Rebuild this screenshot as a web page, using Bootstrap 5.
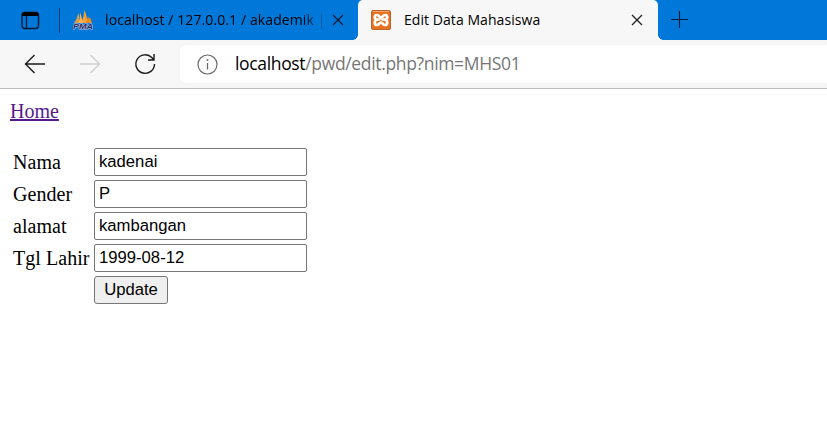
<!DOCTYPE html>
<html lang="id">
<head>
<meta charset="utf-8">
<meta name="viewport" content="width=device-width, initial-scale=1">
<title>Edit Data Mahasiswa</title>
<link href="https://cdn.jsdelivr.net/npm/bootstrap@5.3.0/dist/css/bootstrap.min.css" rel="stylesheet">
<style>
body{background:#fff;color:#000;overflow:hidden}
svg{display:block;flex:none}
.chrome{font-family:"Open Sans","Noto Sans",sans-serif}
.tabstrip{height:40px;background:#0078d9}
.tab-actions{width:60px;height:40px;padding-left:21px}
.split-line{width:1px;height:25px;background:#003f73;margin-left:-1px}
.tab-text{font-size:14px;line-height:20px;white-space:nowrap}
.tab-idle{width:298px;height:40px;padding-left:13px}
.tab-idle .tab-text{width:219px;margin-left:12px;letter-spacing:.1px;-webkit-mask-image:linear-gradient(90deg,#000 198px,#0004 214px);mask-image:linear-gradient(90deg,#000 198px,#0004 214px)}
.tab-current{width:300px;height:40px;padding-left:13px;background:#f7f7f7;border-radius:5px 5px 0 0}
.tab-current::before,.tab-current::after{content:"";position:absolute;bottom:0;width:5px;height:5px}
.tab-current::before{left:-5px;background:radial-gradient(circle at 0 0,transparent 4.5px,#f7f7f7 5px)}
.tab-current::after{right:-5px;background:radial-gradient(circle at 100% 0,transparent 4.5px,#f7f7f7 5px)}
.tab-current .tab-text{width:227px;margin-left:13px;letter-spacing:.06px}
.new-tab{margin-left:13px}
.toolbar{height:49px;background:#f7f7f7;border-bottom:1px solid #bcbcbc;padding-left:24px}
.nav-icons{gap:33px}
.address{height:38px;margin-left:24px;padding-left:17px;background:#fff;border-radius:5px 0 0 5px;box-shadow:0 0 3px #0000000d}
.url{font-size:17.5px;line-height:24px;margin-left:17px;color:#767676;white-space:nowrap;letter-spacing:-.34px;padding-bottom:2px}
.url span{color:#000}
.page{font-family:"Liberation Serif","Times New Roman",serif;font-size:20px;line-height:23px;padding:11px 10px 10px}
.page a{color:#551a8b}
.form-grid{display:grid;grid-template-columns:77px 213px;column-gap:4px;row-gap:4px;margin:25px 0 0 3px}
.form-grid label{line-height:28px;height:28px;white-space:nowrap;letter-spacing:.05px}
.field,.update{font-family:"Liberation Sans",Arial,sans-serif;font-size:16.667px;line-height:19px;height:28px;border:1px solid #767676;border-radius:2px;color:#000}
.field{width:213px;padding:2px 4px;background:#fff}
.update{grid-column:2;width:74px;padding:0 0 1px;background:#efefef;border-radius:3px}
</style>
</head>
<body>
<header class="chrome">
  <div class="tabstrip d-flex align-items-center">
    <div class="tab-actions d-flex align-items-center">
      <svg width="19" height="19" viewBox="0 0 19 19"><rect x="1" y="1.5" width="16.5" height="16" rx="3" fill="none" stroke="#001a35" stroke-width="1.4"/><path d="M1 5V4a3 3 0 0 1 3-3h10.5a3 3 0 0 1 3 3v1z" fill="#000"/><path d="M5.500 5v12" stroke="#001a35" stroke-width="1.3"/></svg>
    </div>
    <div class="split-line"></div>
    <div class="tab-idle d-flex align-items-center">
      <svg width="20" height="20" viewBox="0 0 20 20"><path d="M1 13Q4 9 5.500 3Q7 8 6 13z" fill="#d9a04b"/><path d="M8 13Q11 7 11.500 0Q14.500 7 14 13z" fill="#f7a035"/><path d="M13 13l2-7 1 3 1-2 2 6z" fill="#e88b20"/><path d="M5.500 13Q7.500 8 7 2l3 11z" fill="#ffb04f"/><text x="0" y="19" textLength="20" lengthAdjust="spacingAndGlyphs" font-family="Liberation Sans,Arial,sans-serif" font-weight="700" font-style="italic" font-size="8" fill="#252b64" stroke="#b9bfdc" stroke-width="1.2" paint-order="stroke">PMA</text></svg>
      <span class="tab-text">localhost / 127.0.0.1 / akademik |</span>
      <svg class="ms-2" width="12" height="12" viewBox="0 0 12 12"><path d="M1 1l10 10M11 1L1 11" stroke="#001a35" stroke-width="1.3"/></svg>
    </div>
    <div class="tab-current position-relative d-flex align-items-center">
      <svg width="20" height="20" viewBox="0 0 20 20"><rect x=".5" y=".5" width="19" height="19" rx="1.5" fill="#e8711f" stroke="#b9652f"/><path d="M2 1.500h16" stroke="#f3a470"/><g fill="none" stroke="#fff" stroke-width="2.700" stroke-linecap="round" stroke-linejoin="round"><path d="M8.500 9.500H5.800C3 9 3.200 5 5.800 5C8.500 5 8 7.500 10 7.500s1.500-2.500 4.200-2.500C16.800 5 17 9 14.200 9.500h-2.700"/><path d="M5.800 9.500C3 10.500 3.200 15 5.800 15C8.500 15 8 12.500 10 12.500s1.500 2.500 4.200 2.500C16.800 15 17 10.500 14.200 9.500"/></g></svg>
      <span class="tab-text">Edit Data Mahasiswa</span>
      <svg width="12" height="12" viewBox="0 0 12 12"><path d="M1 1l10 10M11 1L1 11" stroke="#222" stroke-width="1.3"/></svg>
    </div>
    <svg class="new-tab" width="18" height="18" viewBox="0 0 18 18"><path d="M8.500 0v17M0 8.500h17" stroke="#001a35" stroke-width="1.1"/></svg>
  </div>
  <div class="toolbar d-flex align-items-center">
    <div class="nav-icons d-flex align-items-center">
      <svg width="22" height="20" viewBox="0 0 22 20"><path d="M21 10H1.500M10.500 1L1.500 10l9 9" fill="none" stroke="#1b1b1b" stroke-width="1.4"/></svg>
      <svg width="22" height="20" viewBox="0 0 22 20"><path d="M1 10h19.500M11.500 1l9 9-9 9" fill="none" stroke="#cdcdcd" stroke-width="1.3"/></svg>
      <svg width="22" height="22" viewBox="0 0 22 22"><path d="M20.500 11A9.300 9.300 0 1 1 17.800 4.500L20 7M20 1v6h-6" fill="none" stroke="#1b1b1b" stroke-width="1.4"/></svg>
    </div>
    <div class="address d-flex align-items-center flex-grow-1">
      <svg width="21" height="21" viewBox="0 0 21 21"><circle cx="10.500" cy="10.500" r="9.500" fill="none" stroke="#6b6b6b" stroke-width="1.2"/><path d="M10.500 9v6.500" stroke="#6b6b6b" stroke-width="1.3"/><circle cx="10.500" cy="6" r="1" fill="#6b6b6b"/></svg>
      <div class="url"><span>localhost</span>/pwd/edit.php?nim=MHS01</div>
    </div>
  </div>
</header>
<main class="page">
  <a href="#">Home</a>
  <form class="form-grid">
    <label for="nama">Nama</label><input class="field" id="nama" value="kadenai">
    <label for="gender">Gender</label><input class="field" id="gender" value="P">
    <label for="alamat">alamat</label><input class="field" id="alamat" value="kambangan">
    <label for="lahir">Tgl Lahir</label><input class="field" id="lahir" value="1999-08-12">
    <button class="update" type="button">Update</button>
  </form>
</main>
<script src="https://cdn.jsdelivr.net/npm/bootstrap@5.3.0/dist/js/bootstrap.bundle.min.js"></script>
</body>
</html>
